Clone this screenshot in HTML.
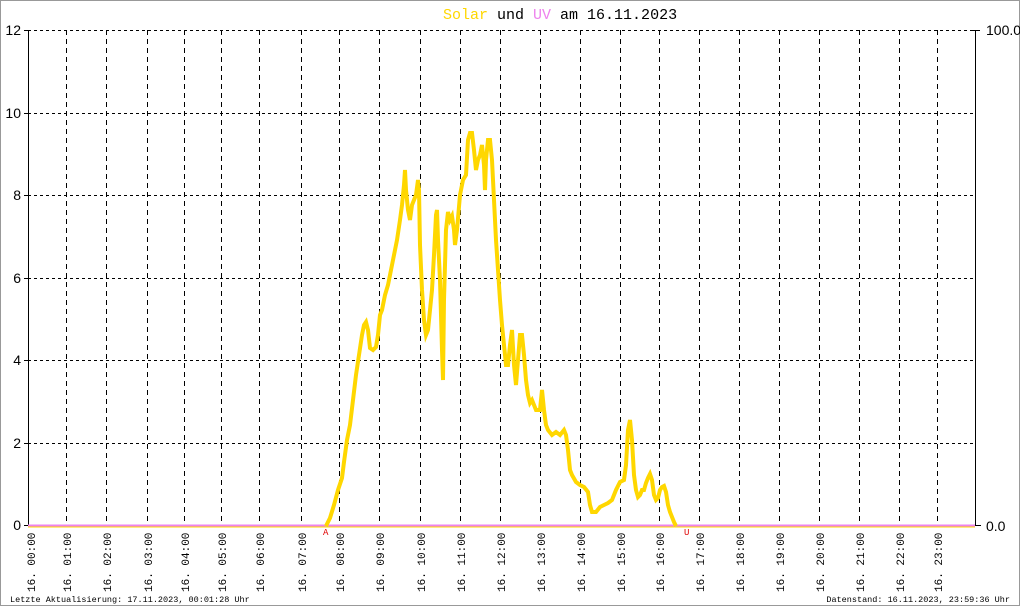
<!DOCTYPE html>
<html><head><meta charset="utf-8"><style>
html,body{margin:0;padding:0;background:#fff}
svg{display:block}
</style></head><body>
<svg width="1020" height="606" viewBox="0 0 1020 606" xmlns="http://www.w3.org/2000/svg">
<rect x="0.5" y="0.5" width="1019" height="605" fill="#fff" stroke="#999"/>
<text x="443" y="19" font-family="Liberation Mono, monospace" font-size="15" fill="#000"><tspan fill="#ffd700">Solar</tspan> und <tspan fill="#ee82ee">UV</tspan> am 16.11.2023</text>
<g stroke="#000" stroke-width="1" stroke-dasharray="3,3" shape-rendering="crispEdges">
<line x1="28" y1="30.5" x2="975" y2="30.5"/>
<line x1="28" y1="113.5" x2="975" y2="113.5"/>
<line x1="28" y1="195.5" x2="975" y2="195.5"/>
<line x1="28" y1="278.5" x2="975" y2="278.5"/>
<line x1="28" y1="360.5" x2="975" y2="360.5"/>
<line x1="28" y1="443.5" x2="975" y2="443.5"/>
</g>
<g stroke="#000" stroke-width="1" stroke-dasharray="5,4" shape-rendering="crispEdges">
<line x1="66.5" y1="30" x2="66.5" y2="526"/>
<line x1="106.5" y1="30" x2="106.5" y2="526"/>
<line x1="147.5" y1="30" x2="147.5" y2="526"/>
<line x1="184.5" y1="30" x2="184.5" y2="526"/>
<line x1="221.5" y1="30" x2="221.5" y2="526"/>
<line x1="259.5" y1="30" x2="259.5" y2="526"/>
<line x1="301.5" y1="30" x2="301.5" y2="526"/>
<line x1="339.5" y1="30" x2="339.5" y2="526"/>
<line x1="379.5" y1="30" x2="379.5" y2="526"/>
<line x1="420.5" y1="30" x2="420.5" y2="526"/>
<line x1="460.5" y1="30" x2="460.5" y2="526"/>
<line x1="500.5" y1="30" x2="500.5" y2="526"/>
<line x1="540.5" y1="30" x2="540.5" y2="526"/>
<line x1="580.5" y1="30" x2="580.5" y2="526"/>
<line x1="620.5" y1="30" x2="620.5" y2="526"/>
<line x1="659.5" y1="30" x2="659.5" y2="526"/>
<line x1="699.5" y1="30" x2="699.5" y2="526"/>
<line x1="739.5" y1="30" x2="739.5" y2="526"/>
<line x1="779.5" y1="30" x2="779.5" y2="526"/>
<line x1="819.5" y1="30" x2="819.5" y2="526"/>
<line x1="859.5" y1="30" x2="859.5" y2="526"/>
<line x1="899.5" y1="30" x2="899.5" y2="526"/>
<line x1="937.5" y1="30" x2="937.5" y2="526"/>
</g>
<g stroke="#000" stroke-width="1" shape-rendering="crispEdges">
<line x1="28.5" y1="30" x2="28.5" y2="526"/>
<line x1="975.5" y1="30" x2="975.5" y2="526"/>
<line x1="24" y1="30.5" x2="29" y2="30.5"/>
<line x1="24" y1="113.5" x2="29" y2="113.5"/>
<line x1="24" y1="195.5" x2="29" y2="195.5"/>
<line x1="24" y1="278.5" x2="29" y2="278.5"/>
<line x1="24" y1="360.5" x2="29" y2="360.5"/>
<line x1="24" y1="443.5" x2="29" y2="443.5"/>
<line x1="24" y1="525.5" x2="29" y2="525.5"/>
<line x1="972" y1="30.5" x2="980" y2="30.5"/>
<line x1="975" y1="525.5" x2="981" y2="525.5"/>
</g>
<g font-family="Liberation Sans, sans-serif" font-size="14" fill="#000" text-anchor="end">
<text x="21" y="35">12</text>
<text x="21" y="118">10</text>
<text x="21" y="200">8</text>
<text x="21" y="283">6</text>
<text x="21" y="365">4</text>
<text x="21" y="448">2</text>
<text x="21" y="530">0</text>
</g>
<g font-family="Liberation Sans, sans-serif" font-size="14" fill="#000">
<text x="986" y="35">100.0</text>
<text x="986" y="531">0.0</text>
</g>
<line x1="28" y1="527" x2="975" y2="527" stroke="#ffd700" stroke-width="1"/>
<line x1="28" y1="525.5" x2="975" y2="525.5" stroke="#ee82ee" stroke-width="2"/>
<polyline fill="none" stroke="#ffd700" stroke-width="4" stroke-linejoin="miter" points="326,526 330,518 334,505 338,490 342,478 344,462 347,440 350,425 353,400 356,375 359,355 362,335 364,325 366,322 368,330 370,348 373,350 376,347 378,335 380,315 382,310 385,295 388,285 390,275 392,265 395,250 397,240 400,220 402,205 404,185 405,170 406,190 408,210 410,220 412,205 414,200 416,195 418,180 419,190 420,245 422,290 424,320 426,335 428,330 430,310 432,290 434,255 436,215 437,210 438,240 440,280 442,350 443,380 444,300 446,230 448,212 450,220 452,216 454,230 455,245 457,230 460,195 463,180 466,175 468,140 470,133 472,133 474,150 476,170 478,160 480,155 482,145 484,165 485,190 486,160 488,140 490,140 492,160 494,200 496,240 498,270 500,300 502,325 504,345 506,365 508,365 510,345 512,330 514,365 516,385 518,360 520,335 522,335 524,355 526,380 528,395 530,403 532,400 534,405 536,410 540,410 542,390 544,410 546,425 548,430 552,435 556,432 560,435 564,430 566,435 568,450 570,470 572,475 576,482 580,485 584,487 588,492 590,505 592,512 596,512 600,507 604,505 608,503 612,500 616,490 620,482 624,480 626,465 628,430 630,420 632,440 634,475 636,490 638,497 640,495 642,490 644,490 646,483 648,478 650,474 652,480 654,495 656,500 658,498 660,490 662,487 664,486 666,492 668,505 670,512 672,517 674,522 676,526"/>
<g font-family="Liberation Mono, monospace" font-size="9" fill="#e00000">
<text x="323" y="535">A</text>
<text x="684" y="535">U</text>
</g>
<g font-family="Liberation Mono, monospace" font-size="11" fill="#000">
<text transform="translate(35,592) rotate(-90)">16. 00:00</text>
<text transform="translate(71,592) rotate(-90)">16. 01:00</text>
<text transform="translate(111,592) rotate(-90)">16. 02:00</text>
<text transform="translate(152,592) rotate(-90)">16. 03:00</text>
<text transform="translate(189,592) rotate(-90)">16. 04:00</text>
<text transform="translate(226,592) rotate(-90)">16. 05:00</text>
<text transform="translate(264,592) rotate(-90)">16. 06:00</text>
<text transform="translate(306,592) rotate(-90)">16. 07:00</text>
<text transform="translate(344,592) rotate(-90)">16. 08:00</text>
<text transform="translate(384,592) rotate(-90)">16. 09:00</text>
<text transform="translate(425,592) rotate(-90)">16. 10:00</text>
<text transform="translate(465,592) rotate(-90)">16. 11:00</text>
<text transform="translate(505,592) rotate(-90)">16. 12:00</text>
<text transform="translate(545,592) rotate(-90)">16. 13:00</text>
<text transform="translate(585,592) rotate(-90)">16. 14:00</text>
<text transform="translate(625,592) rotate(-90)">16. 15:00</text>
<text transform="translate(664,592) rotate(-90)">16. 16:00</text>
<text transform="translate(704,592) rotate(-90)">16. 17:00</text>
<text transform="translate(744,592) rotate(-90)">16. 18:00</text>
<text transform="translate(784,592) rotate(-90)">16. 19:00</text>
<text transform="translate(824,592) rotate(-90)">16. 20:00</text>
<text transform="translate(864,592) rotate(-90)">16. 21:00</text>
<text transform="translate(904,592) rotate(-90)">16. 22:00</text>
<text transform="translate(942,592) rotate(-90)">16. 23:00</text>
</g>
<g font-family="Liberation Mono, monospace" font-size="8.5" fill="#000">
<text x="10" y="602">Letzte Aktualisierung: 17.11.2023, 00:01:28 Uhr</text>
<text x="1010" y="602" text-anchor="end">Datenstand: 16.11.2023, 23:59:36 Uhr</text>
</g>
</svg>
</body></html>
